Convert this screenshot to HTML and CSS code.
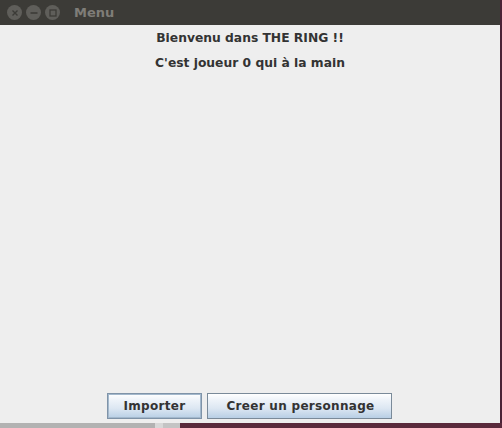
FILE: index.html
```html
<!DOCTYPE html>
<html>
<head>
<meta charset="utf-8">
<link rel="stylesheet" href="styles.css">
</head>
<body>
<div class="screen">
  <div class="top">
    <div class="window">
      <div class="titlebar">
        <div class="wbtns">
          <span class="wbtn"><svg width="14" height="14" viewBox="0 0 14 14"><path d="M4.5 4.5 L9.5 9.5 M9.5 4.5 L4.5 9.5" stroke="#3c3b37" stroke-width="1.4"/></svg></span>
          <span class="wbtn"><svg width="14" height="14" viewBox="0 0 14 14"><path d="M3.5 7 H10.5" stroke="#3c3b37" stroke-width="1.6"/></svg></span>
          <span class="wbtn"><svg width="14" height="14" viewBox="0 0 14 14"><rect x="4" y="4" width="6" height="6" fill="none" stroke="#3c3b37" stroke-width="1.3"/></svg></span>
        </div>
        <span class="title">Menu</span>
      </div>
      <div class="content">
        <div class="labels">
          <div class="label">Bienvenu dans THE RING !!</div>
          <div class="label">C'est joueur 0 qui à la main</div>
        </div>
        <div class="buttons">
          <button class="btn focused">Importer</button>
          <button class="btn wide">Creer un personnage</button>
        </div>
      </div>
    </div>
    <div class="edge"></div>
  </div>
  <div class="desk">
    <div class="d1"></div>
    <div class="d2"></div>
    <div class="d3"></div>
    <div class="d4"></div>
  </div>
</div>
</body>
</html>
```
FILE: styles.css
```css
html, body {
  margin: 0;
  padding: 0;
  background: #5a2a3c;
}
.screen {
  width: 502px;
  height: 428px;
  display: flex;
  flex-direction: column;
  overflow: hidden;
}
.top {
  display: flex;
  height: 423px;
}
.window {
  width: 500px;
  display: flex;
  flex-direction: column;
  background: #eeeeee;
}
.edge {
  flex: 1;
  background: #4a2236;
}
.titlebar {
  height: 25px;
  background: #3c3b37;
  display: flex;
  align-items: center;
  padding-left: 7px;
  box-sizing: border-box;
}
.wbtns {
  display: flex;
  gap: 4px;
}
.wbtn {
  width: 15px;
  height: 15px;
  border-radius: 50%;
  background: #5f5e5a;
  display: flex;
  align-items: center;
  justify-content: center;
}
.title {
  margin-left: 14px;
  font-family: "DejaVu Sans", sans-serif;
  font-weight: bold;
  font-size: 13px;
  color: #7f7d78;
}
.content {
  flex: 1;
  display: flex;
  flex-direction: column;
  justify-content: space-between;
}
.labels {
  display: flex;
  flex-direction: column;
  align-items: center;
  padding-top: 5px;
  gap: 8px;
}
.label {
  font-family: "DejaVu Sans", sans-serif;
  font-weight: bold;
  font-size: 12.3px;
  line-height: 17px;
  color: #333333;
}
.buttons {
  display: flex;
  justify-content: center;
  gap: 5px;
  padding-bottom: 4px;
  padding-right: 1px;
}
.btn {
  height: 26px;
  box-sizing: border-box;
  padding: 0 16px;
  font-family: "DejaVu Sans", sans-serif;
  font-weight: bold;
  font-size: 12px;
  letter-spacing: 0.3px;
  color: #333333;
  border: 1px solid #7a8a99;
  border-radius: 0;
  background: linear-gradient(#ffffff 0%, #eef3f9 25%, #dce7f2 60%, #b8cfe5 100%);
}
.btn.wide {
  padding: 0 17px 0 18px;
}
.btn.focused {
  box-shadow: inset 0 0 0 1px #a3b8cc;
  border-color: #7f93a8;
}
.desk {
  flex: 1;
  display: flex;
}
.d1 { width: 155px; background: #b2b2b2; }
.d2 { width: 8px; background: #d8d8d8; }
.d3 { width: 17px; background: #c4c4c4; }
.d4 { flex: 1; background: #5a2a3c; }
```
